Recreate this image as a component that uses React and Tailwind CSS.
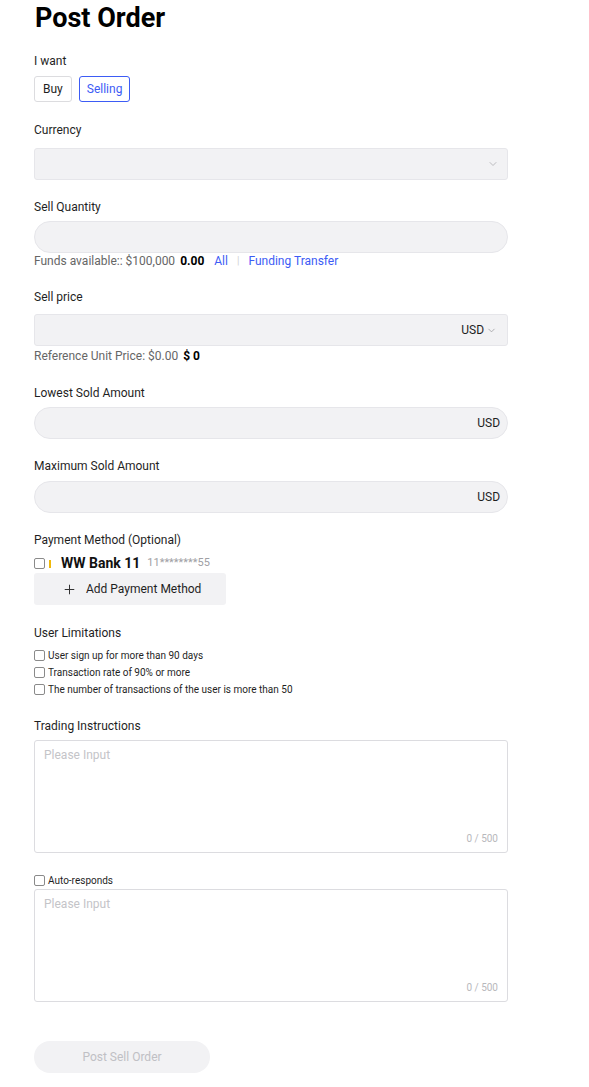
import React from 'react';
import { ChevronDown, Plus } from 'lucide-react';

const Label = ({ children, className = '' }) => (
  <div className={`text-[12px] leading-4 text-[#1f1f1f] ${className}`}>{children}</div>
);

const Box = () => <span className="inline-block w-[11px] h-[11px] border border-[#8a8a8a] rounded-[2px] bg-white flex-shrink-0" />;

const PillInput = ({ suffix }) => (
  <div className="h-8 w-full rounded-full bg-[#f2f2f4] border border-[#e6e6ea] flex items-center justify-end px-[7px]">
    {suffix && <span className="text-[12px] text-[#1f1f1f]">{suffix}</span>}
  </div>
);

const TextArea = () => (
  <div className="h-[113px] w-full border border-[#dcdce0] rounded-[3px] bg-white flex flex-col justify-between px-[9px] pt-[6px] pb-[7px]">
    <span className="text-[12px] leading-4 text-[#c4c4c8]">Please Input</span>
    <span className="self-end text-[10px] leading-3 text-[#b8b8bc]">0 / 500</span>
  </div>
);

export default function App() {
  return (
    <div className="min-h-screen bg-white font-['Roboto',sans-serif] pl-[34px] w-[508px]">
      <h1 className="pt-[2px] pl-[1px] text-[27px] leading-8 font-bold text-black">Post Order</h1>

      <Label className="mt-[19px]">I want</Label>
      <div className="mt-[7px] flex gap-[7px]">
        <button className="h-[26px] px-[8px] border border-[#dcdcdf] rounded-[3px] text-[12px] text-[#1f1f1f]">Buy</button>
        <button className="h-[26px] px-[7px] border border-[#3d5cf5] rounded-[3px] text-[12px] text-[#3d5cf5]">Selling</button>
      </div>

      <Label className="mt-[20px]">Currency</Label>
      <div className="mt-[10px] h-8 w-full rounded-[3px] bg-[#f2f2f4] border border-[#e6e6ea] flex items-center justify-end pr-[8px]">
        <ChevronDown size={12} className="text-[#a8a8ac]" strokeWidth={1.5} />
      </div>

      <Label className="mt-[19px]">Sell Quantity</Label>
      <div className="mt-[6px]"><PillInput /></div>
      <div className="text-[12px] leading-4 flex items-center">
        <span className="text-[#666]">Funds available:: $100,000</span>
        <span className="ml-[5px] font-bold text-black">0.00</span>
        <span className="ml-[10px] text-[#3d5cf5]">All</span>
        <span className="mx-[9px] text-[#d0d0d4] text-[10px]">|</span>
        <span className="text-[#3d5cf5]">Funding Transfer</span>
      </div>

      <Label className="mt-[20px]">Sell price</Label>
      <div className="mt-[9px] h-8 w-full rounded-[3px] bg-[#f2f2f4] border border-[#e6e6ea] flex items-center justify-end pr-[10px] gap-[2px]">
        <span className="text-[12px] text-[#1f1f1f]">USD</span>
        <ChevronDown size={11} className="text-[#a0a0a4]" strokeWidth={1.8} />
      </div>
      <div className="mt-[2px] text-[12px] leading-4 flex items-center">
        <span className="text-[#666]">Reference Unit Price: $0.00</span>
        <span className="ml-[5px] font-bold text-black">$ 0</span>
      </div>

      <Label className="mt-[21px]">Lowest Sold Amount</Label>
      <div className="mt-[6px]"><PillInput suffix="USD" /></div>

      <Label className="mt-[19px]">Maximum Sold Amount</Label>
      <div className="mt-[7px]"><PillInput suffix="USD" /></div>

      <Label className="mt-[19px]">Payment Method (Optional)</Label>
      <div className="mt-[8px] flex items-center h-[15px]">
        <Box />
        <span className="ml-[4px] w-[2px] h-[8px] bg-[#f0b90b]" />
        <span className="ml-[10px] text-[14px] font-bold text-[#111]">WW Bank 11</span>
        <span className="ml-[7px] text-[11px] text-[#a0a0a4]">11********55</span>
      </div>
      <button className="mt-[2px] h-8 w-[192px] bg-[#f2f2f4] rounded-[3px] flex items-center pl-[28px] gap-[9px] text-[12px] text-[#1f1f1f]">
        <Plus size={15} strokeWidth={1.6} className="text-[#333]" />
        Add Payment Method
      </button>

      <Label className="mt-[20px]">User Limitations</Label>
      <div className="mt-[6px] flex flex-col">
        {['User sign up for more than 90 days', 'Transaction rate of 90% or more', 'The number of transactions of the user is more than 50'].map((t) => (
          <div key={t} className="h-[17px] flex items-center gap-[3px] text-[10px] text-[#1f1f1f]">
            <Box />
            <span>{t}</span>
          </div>
        ))}
      </div>

      <Label className="mt-[20px]">Trading Instructions</Label>
      <div className="mt-[6px]"><TextArea /></div>

      <div className="mt-[19px] flex items-center gap-[3px] h-[16px] text-[10px] text-[#1f1f1f]">
        <Box />
        <span>Auto-responds</span>
      </div>
      <div className="mt-[1px]"><TextArea /></div>

      <button className="mt-[39px] h-8 w-[176px] rounded-full bg-[#f2f2f4] text-[12px] text-[#c0c0c4]">Post Sell Order</button>
    </div>
  );
}
